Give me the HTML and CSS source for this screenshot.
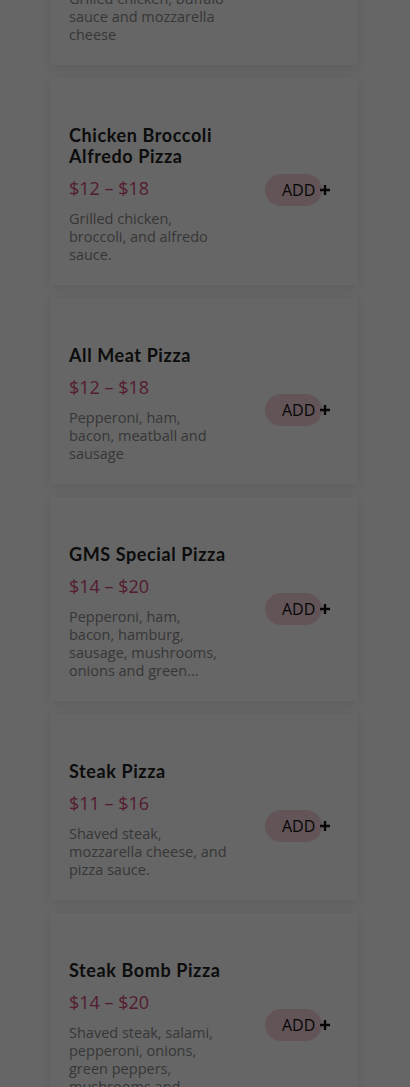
FILE: index.html
```html
<!DOCTYPE html>
<html>

<head>
    <meta charset="utf-8">
    <title>Pizza Menu</title>
    <link rel="stylesheet" href="styles.css">
</head>

<body>
    <ul class="menu" id="menu">
        <li class="item">
            <div class="info">
                <h3>Buffalo Chicken Pizza</h3>
                <p class="price">$12 – $18</p>
                <p class="desc">Grilled chicken, buffalo sauce and mozzarella cheese</p>
            </div>
            <a class="add" href="javascript:void(0)">ADD <svg width="12" height="12" viewBox="0 0 12 12"><path d="M6 1v10M1 6h10" stroke="#111" stroke-width="2.4" fill="none"/></svg></a>
        </li>
        <li class="item">
            <div class="info">
                <h3>Chicken Broccoli Alfredo Pizza</h3>
                <p class="price">$12 – $18</p>
                <p class="desc">Grilled chicken, broccoli, and alfredo sauce.</p>
            </div>
            <a class="add" href="javascript:void(0)">ADD <svg width="12" height="12" viewBox="0 0 12 12"><path d="M6 1v10M1 6h10" stroke="#111" stroke-width="2.4" fill="none"/></svg></a>
        </li>
        <li class="item">
            <div class="info">
                <h3>All Meat Pizza</h3>
                <p class="price">$12 – $18</p>
                <p class="desc">Pepperoni, ham, bacon, meatball and sausage</p>
            </div>
            <a class="add" href="javascript:void(0)">ADD <svg width="12" height="12" viewBox="0 0 12 12"><path d="M6 1v10M1 6h10" stroke="#111" stroke-width="2.4" fill="none"/></svg></a>
        </li>
        <li class="item">
            <div class="info">
                <h3>GMS Special Pizza</h3>
                <p class="price">$14 – $20</p>
                <p class="desc">Pepperoni, ham, bacon, hamburg, sausage, mushrooms, onions and green peppers</p>
            </div>
            <a class="add" href="javascript:void(0)">ADD <svg width="12" height="12" viewBox="0 0 12 12"><path d="M6 1v10M1 6h10" stroke="#111" stroke-width="2.4" fill="none"/></svg></a>
        </li>
        <li class="item">
            <div class="info">
                <h3>Steak Pizza</h3>
                <p class="price">$11 – $16</p>
                <p class="desc">Shaved steak, mozzarella cheese, and pizza sauce.</p>
            </div>
            <a class="add" href="javascript:void(0)">ADD <svg width="12" height="12" viewBox="0 0 12 12"><path d="M6 1v10M1 6h10" stroke="#111" stroke-width="2.4" fill="none"/></svg></a>
        </li>
        <li class="item">
            <div class="info">
                <h3>Steak Bomb Pizza</h3>
                <p class="price">$14 – $20</p>
                <p class="desc">Shaved steak, salami, pepperoni, onions, green peppers, mushrooms and cheese</p>
            </div>
            <a class="add" href="javascript:void(0)">ADD <svg width="12" height="12" viewBox="0 0 12 12"><path d="M6 1v10M1 6h10" stroke="#111" stroke-width="2.4" fill="none"/></svg></a>
        </li>
    </ul>
    <div class="mask"></div>
</body>

</html>
```

FILE: styles.css
```css
* {
    padding: 0;
    margin: 0;
}

ul {
    list-style: none;
}

a {
    text-decoration: none;
}

html,
body {
    width: 100%;
    height: 100%;
}

body {
    background-color: #fff;
    overflow: hidden;
    font-family: "Open Sans", "Liberation Sans", sans-serif;
}

.menu {
    width: 308px;
    margin: -142px 0 0 50px;
}

.menu .item {
    display: flex;
    align-items: flex-start;
    padding: 47px 19px 21px;
    margin-bottom: 13px;
    background-color: #fff;
    box-shadow: 0 2px 12px rgba(0, 0, 0, 0.1);
}

.info {
    width: 160px;
    flex: 0 0 160px;
}

.info h3 {
    font-family: "Lato", "Liberation Sans", sans-serif;
    font-size: 18px;
    font-weight: 700;
    letter-spacing: 0.6px;
    line-height: 21px;
    color: #222;
    margin-bottom: 9px;
}

.info .price {
    font-size: 18px;
    line-height: 24px;
    color: #d2487a;
    margin-bottom: 10px;
}

.info .desc {
    font-size: 14.5px;
    line-height: 18px;
    color: #8a8a8a;
    display: -webkit-box;
    -webkit-line-clamp: 4;
    -webkit-box-orient: vertical;
    overflow: hidden;
}

.add {
    display: flex;
    align-items: center;
    width: 57px;
    height: 32px;
    margin: 49px 17px 0 auto;
    padding-left: 17px;
    box-sizing: border-box;
    border-radius: 16px;
    background-color: #f5d3da;
    color: #111;
    font-size: 16px;
    white-space: nowrap;
}

.add svg {
    margin-left: 4px;
    flex: none;
}

.mask {
    position: fixed;
    left: 0;
    top: 0;
    right: 0;
    bottom: 0;
    background-color: rgba(0, 0, 0, 0.6);
}
```
